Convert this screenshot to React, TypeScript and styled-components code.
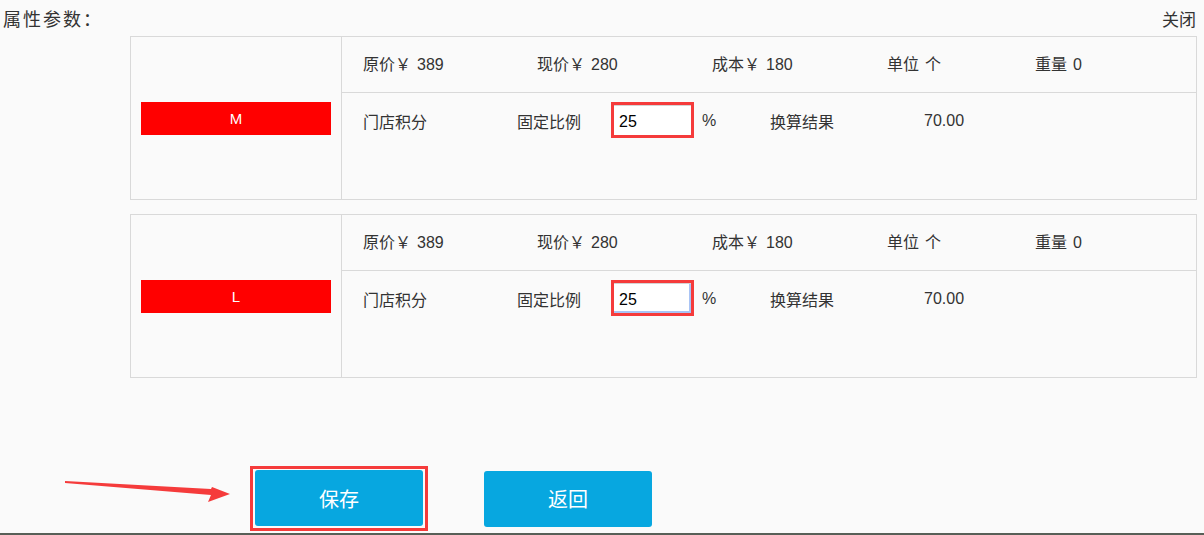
import React from 'react';
import styled, { createGlobalStyle } from 'styled-components';

type Sku = {
  size: string;
  origin: number;
  price: number;
  cost: number;
  unit: string;
  weight: number;
  ratio: string;
  result: string;
  focused?: boolean;
};

const skus: Sku[] = [
  { size: 'M', origin: 389, price: 280, cost: 180, unit: '个', weight: 0, ratio: '25', result: '70.00' },
  { size: 'L', origin: 389, price: 280, cost: 180, unit: '个', weight: 0, ratio: '25', result: '70.00', focused: true },
];

const GlobalStyle = createGlobalStyle`
  body {
    margin: 0;
    background: #fafafa;
    font-family: "Liberation Sans", "Noto Sans CJK SC", sans-serif;
    color: #333;
  }
  * {
    box-sizing: border-box;
  }
`;

export default function App() {
  return (
    <>
      <GlobalStyle />
      <Page>
        <Header>
          <Title>属性参数：</Title>
          <Close>关闭</Close>
        </Header>
        <CardList>
          {skus.map((sku) => (
            <Card key={sku.size}>
              <LabelCell>
                <SizeLabel>{sku.size}</SizeLabel>
              </LabelCell>
              <Detail>
                <PriceRow>
                  <span>原价￥<Num>{sku.origin}</Num></span>
                  <span>现价￥<Num>{sku.price}</Num></span>
                  <span>成本￥<Num>{sku.cost}</Num></span>
                  <span>单位<Num>{sku.unit}</Num></span>
                  <span>重量<Num>{sku.weight}</Num></span>
                </PriceRow>
                <PointRow>
                  <Cell $w={154}>门店积分</Cell>
                  <Cell $w={97}>固定比例</Cell>
                  <RatioInput defaultValue={sku.ratio} $focused={!!sku.focused} />
                  <Cell $w={68} style={{ marginLeft: 11 }}>%</Cell>
                  <Cell $w={154}>换算结果</Cell>
                  <Cell>{sku.result}</Cell>
                </PointRow>
              </Detail>
            </Card>
          ))}
        </CardList>
        <Actions>
          <Mark>
            <Button>保存</Button>
          </Mark>
          <Button>返回</Button>
        </Actions>
        <BottomLine />
        <Arrow width="180" height="32" viewBox="0 0 180 32">
          <polygon points="5,5 151,13 152,11 170,18 148,26 151,19 5,7" fill="#f53b3b" />
        </Arrow>
      </Page>
    </>
  );
}

const Page = styled.div`
  position: relative;
  width: 1204px;
  height: 535px;
  overflow: hidden;
`;

const Header = styled.div`
  height: 36px;
  padding: 0 8px 0 3px;
  display: flex;
  align-items: center;
  justify-content: space-between;
`;

const Title = styled.span`
  font-size: 18px;
  letter-spacing: 2px;
`;

const Close = styled.span`
  font-size: 17px;
  cursor: pointer;
`;

const CardList = styled.div`
  margin-left: 130px;
  width: 1067px;
  display: flex;
  flex-direction: column;
  gap: 14px;
`;

const Card = styled.div`
  height: 164px;
  display: flex;
  border: 1px solid #d9d9d9;
`;

const LabelCell = styled.div`
  width: 211px;
  padding: 0 10px;
  display: flex;
  align-items: center;
  border-right: 1px solid #d9d9d9;
`;

const SizeLabel = styled.div`
  width: 190px;
  height: 33px;
  display: flex;
  align-items: center;
  justify-content: center;
  background: #ff0000;
  color: #fff;
  font-size: 15px;
`;

const Detail = styled.div`
  flex: 1;
  display: flex;
  flex-direction: column;
`;

const PriceRow = styled.div`
  height: 56px;
  padding: 0 0 3px 21px;
  display: grid;
  grid-template-columns: 174px 175px 175px 148px auto;
  align-items: center;
  border-bottom: 1px solid #d9d9d9;
  font-size: 16px;
`;

const Num = styled.span`
  margin-left: 6px;
`;

const PointRow = styled.div`
  height: 32px;
  margin-top: 11px;
  padding-left: 21px;
  display: flex;
  align-items: center;
  font-size: 16px;
`;

const Cell = styled.span<{ $w?: number }>`
  flex: none;
  width: ${(p) => (p.$w ? `${p.$w}px` : 'auto')};
  padding-top: 2px;
`;

const RatioInput = styled.input<{ $focused: boolean }>`
  width: 77px;
  height: 30px;
  padding: 2px 0 0 5px;
  border: none;
  border-top: 1px solid #d4d4d4;
  background: #fff;
  font-family: "Liberation Sans", sans-serif;
  font-size: 16px;
  color: #000;
  outline: 3px solid #f53b3b;
  box-shadow: ${(p) => (p.$focused ? 'inset -2px -2px 0 #a9c4f5' : 'none')};
`;

const Actions = styled.div`
  margin-top: 88px;
  padding-left: 250px;
  display: flex;
  align-items: center;
  gap: 56px;
`;

const Mark = styled.div`
  padding: 1px 2px 2px;
  border: 3px solid #f53b3b;
  display: flex;
`;

const Button = styled.button`
  width: 168px;
  height: 56px;
  border: none;
  border-radius: 3px;
  background: #07a7e0;
  color: #fff;
  font-family: "Liberation Sans", "Noto Sans CJK SC", sans-serif;
  font-size: 20px;
  cursor: pointer;
`;

const BottomLine = styled.div`
  margin-top: 2px;
  height: 3px;
  background: #585f57;
`;

const Arrow = styled.svg`
  position: absolute;
  left: 60px;
  top: 476px;
`;
